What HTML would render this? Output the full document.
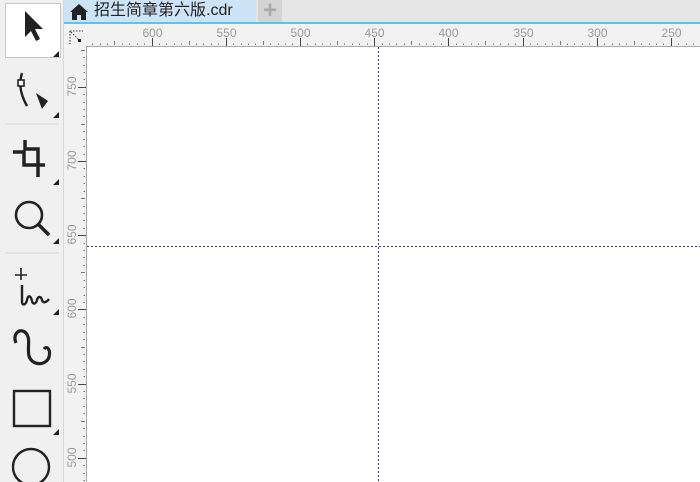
<!DOCTYPE html>
<html><head><meta charset="utf-8"><style>
body{margin:0;width:700px;height:482px;overflow:hidden;background:#f0f0f0;font-family:"Liberation Sans","Noto Sans CJK SC",sans-serif;position:relative}
.a{position:absolute}
</style></head><body>
<div class="a" style="left:0;top:0;width:63px;height:482px;background:#f0f0f0;border-right:1px solid #d8d8d8"></div>
<div class="a" style="left:5px;top:3px;width:54px;height:53px;background:#fff;border:1px solid #c8c8c8"></div>
<svg class="a" style="left:0;top:0" width="64" height="482">
<g fill="#222">
<path d="M25 11 L25 37 L31 31 L36 41 L40 39 L35 29 L43 29 Z"/>
<path d="M53 57 L59 51 L59 57Z"/><path d="M53 118 L59 112 L59 118Z"/><path d="M53 185 L59 179 L59 185Z"/>
<path d="M53 244 L59 238 L59 244Z"/><path d="M53 315 L59 309 L59 315Z"/><path d="M53 435 L59 429 L59 435Z"/>
<path d="M36 93 L48 101 L42 109 Z"/>
</g>
<g fill="none" stroke="#222" stroke-width="2.4">
<path d="M22 73 C20 80 18 90 27 106"/>
<rect x="18" y="80" width="6" height="6" fill="#fff" stroke-width="1.6"/>
</g>
<line x1="5" y1="124" x2="59" y2="124" stroke="#d4d4d4"/>
<line x1="5" y1="253" x2="59" y2="253" stroke="#d4d4d4"/>
<g fill="none" stroke="#222" stroke-width="3.5">
<path d="M13 152 L24 152 L24 165 L45 165"/>
<path d="M25 140 L25 149 L38 149 L38 177"/>
</g>
<g fill="none" stroke="#222" stroke-width="2.6">
<circle cx="29" cy="215" r="13"/><path d="M38 224 L49 235" stroke-width="3.5"/>
<path d="M21 268 V280 M15 275 H27" stroke-width="1.6"/>
<path d="M22 285 V302 C22 306 26 305 27 300 C28 294 31 296 32 301 C33 305 36 304 37 300 C38 296 41 296 42 300 C43 304 47 302 49 299" stroke-width="2.4"/>
<path d="M16 343 C12 334 20 327 26 333 C31 339 27 348 29 356 C32 366 46 366 49 357 C51 350 47 345 44 349" stroke-width="3.2"/>
<rect x="14" y="391" width="36" height="35" stroke-width="2.4"/>
<circle cx="31" cy="467" r="18" stroke-width="2.4"/>
</g>
</svg>
<div class="a" style="left:64px;top:0;width:636px;height:23px;background:#e6e6e6"></div>
<div class="a" style="left:64px;top:0;width:192px;height:23px;background:#cde4f7"></div>
<div class="a" style="left:258px;top:0;width:24px;height:23px;background:#d4d4d4;color:#aaa;font-size:24px;line-height:22px;text-align:center;font-weight:bold">+</div>
<svg class="a" style="left:69px;top:3px" width="20" height="18"><path d="M1 9 L10 1 L19 9 L17 9 L17 17 L12 17 L12 12 L8 12 L8 17 L3 17 L3 9Z" fill="#222"/></svg>
<div class="a" style="left:94px;top:1px;font-size:16px;line-height:20px;color:#222">招生简章第六版.cdr</div>
<div class="a" style="left:64px;top:22px;width:636px;height:2px;background:#5ec2ed"></div>
<div class="a" style="left:64px;top:24px;width:636px;height:22px;background:#f2f2f2"></div>
<div class="a" style="left:64px;top:24px;width:22px;height:458px;background:#f2f2f2"></div>
<div class="a" style="left:87px;top:47px;width:613px;height:435px;background:#fff"></div>
<div class="a" style="left:86px;top:46px;width:614px;height:1px;background:#a8a8a8"></div>
<div class="a" style="left:86px;top:46px;width:1px;height:436px;background:#a8a8a8"></div>
<svg class="a" style="left:0;top:0" width="700" height="482" font-family="Liberation Sans" font-size="12" fill="#9a9a9a">
<g stroke="#777" stroke-width="1"><path id="tt" d=""/></g>
<g stroke="#444" stroke-width="1"><path id="tm" d=""/></g>
<g id="lab"></g>
<g stroke="#333" stroke-dasharray="1.5 1.5" fill="none"><path d="M70 31 H83 M70 31 V44 M71 32 L80 41"/></g>
<rect x="78" y="39" width="3" height="3" fill="#222"/>
<line x1="378.5" y1="47" x2="378.5" y2="482" stroke="#3333dd" stroke-dasharray="2 2"/>
<line x1="87" y1="246.5" x2="700" y2="246.5" stroke="#3333dd" stroke-dasharray="2 2"/>
</svg>
<script>
(function(){
var s="",m="",lab="";
var px=74.2/50;
for(var v=660;v>=230;v-=5){var x=Math.round(151.5+(600-v)*px)+0.5;if(x<88||x>700)continue;
 if(v%50==0){m+="M"+x+" 46V38";lab+='<text x="'+x+'" y="37" text-anchor="middle">'+v+'</text>';}
 else{var L=(v%25==0)?4:1.5; s+="M"+x+" 45V"+(45-L);}}
for(var v=790;v>=480;v-=5){var y=Math.round(161+(700-v)*px)+0.5;if(y<48||y>482)continue;
 if(v%50==0){m+="M86 "+y+"H78";lab+='<text transform="translate(76 '+(y-1)+') rotate(-90)" text-anchor="middle">'+v+'</text>';}
 else{var L=(v%25==0)?4:1.5; s+="M85 "+y+"H"+(85-L);}}
document.getElementById("tt").setAttribute("d",s);
document.getElementById("tm").setAttribute("d",m);
document.getElementById("lab").innerHTML=lab;
})();
</script>
</body></html>
